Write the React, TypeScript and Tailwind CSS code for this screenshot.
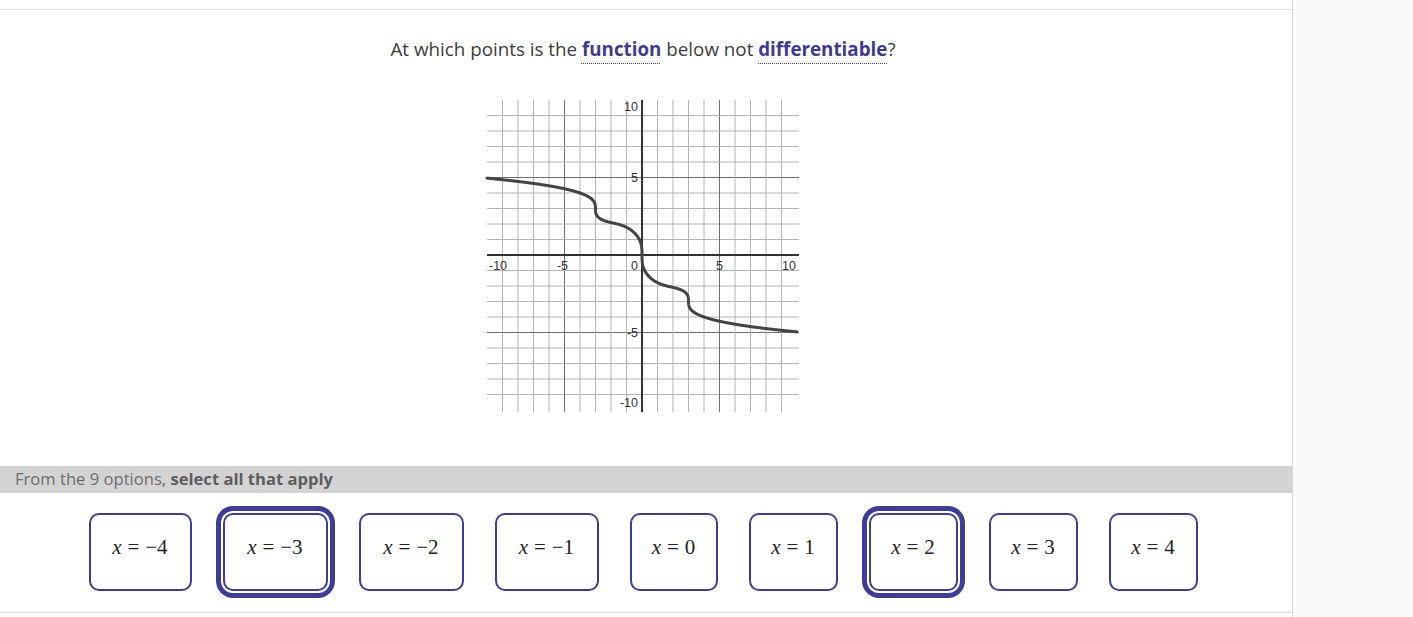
import React from 'react';

const options = [
  { label: '−4', w: 'w-[103px]', selected: false },
  { label: '−3', w: 'w-[105px]', selected: true },
  { label: '−2', w: 'w-[105px]', selected: false },
  { label: '−1', w: 'w-[104px]', selected: false },
  { label: '0', w: 'w-[88px]', selected: false },
  { label: '1', w: 'w-[89px]', selected: false },
  { label: '2', w: 'w-[89px]', selected: true },
  { label: '3', w: 'w-[89px]', selected: false },
  { label: '4', w: 'w-[89px]', selected: false },
];

// graph: -10..10 on both axes, 15.5px per unit, 5px margin inside the svg
const U = 15.5;
const M = 5;
const px = (x: number) => M + (x + 10) * U;
const py = (y: number) => M + (10 - y) * U;

function fpos(x: number) {
  const c = 2.95;
  if (x <= 3) {
    const t = x / 3;
    const w = t * t * (3 - 2 * t);
    const l = -1.78 * Math.cbrt(x);
    const r = -c + 0.91 * Math.cbrt(3 - x);
    return (1 - w) * l + w * r;
  }
  return -c - 1.05 * Math.cbrt(x - 3);
}
const f = (x: number) => (x >= 0 ? fpos(x) : -fpos(-x));

function curvePath() {
  const pts: string[] = [];
  const n = 8000;
  for (let i = 0; i <= n; i++) {
    const x = -10 + (20 * i) / n;
    pts.push(`${px(x).toFixed(2)},${py(f(x)).toFixed(2)}`);
  }
  return 'M' + pts.join('L');
}

function Graph() {
  const lines = [];
  for (let i = -9; i <= 9; i++) {
    if (i === 0) continue;
    const major = i % 5 === 0;
    const col = major ? '#6e6e6e' : '#b4b4b4';
    lines.push(<line key={'v' + i} x1={px(i)} y1={M} x2={px(i)} y2={py(-10) + 2} stroke={col} strokeWidth={1} />);
    lines.push(<line key={'h' + i} x1={M} y1={py(i)} x2={px(10) + 2} y2={py(i)} stroke={col} strokeWidth={1} />);
  }
  return (
    <svg width="322" height="322" className="block mx-auto mt-[32px]" style={{ fontFamily: '"Liberation Sans", Arial, sans-serif' }}>
      {lines}
      <line x1={M} y1={py(0)} x2={px(10) + 2} y2={py(0)} stroke="#333" strokeWidth={2} />
      <line x1={px(0)} y1={M} x2={px(0)} y2={py(-10) + 2} stroke="#333" strokeWidth={2} />
      <g fontSize="12.5" fill="#333">
        <text x={px(0) - 4} y={py(10) + 11} textAnchor="end">10</text>
        <text x={px(0) - 4} y={py(5) + 4} textAnchor="end">5</text>
        <text x={px(0) - 4} y={py(-5) + 4} textAnchor="end">-5</text>
        <text x={px(0) - 4} y={py(-10) - 3} textAnchor="end">-10</text>
        <text x={px(-10) + 2} y={py(0) + 15}>-10</text>
        <text x={px(-5) - 2} y={py(0) + 15} textAnchor="middle">-5</text>
        <text x={px(0) - 4} y={py(0) + 15} textAnchor="end">0</text>
        <text x={px(5)} y={py(0) + 15} textAnchor="middle">5</text>
        <text x={px(10) - 1} y={py(0) + 15} textAnchor="end">10</text>
      </g>
      <path d={curvePath()} fill="none" stroke="#444" strokeWidth={3} strokeLinejoin="round" strokeLinecap="round" />
    </svg>
  );
}

export default function App() {
  return (
    <div className="flex w-full h-[617px] bg-[#f9f9f9] overflow-hidden">
      <div className="w-[1293px] shrink-0 bg-white border-r border-[#dcdcdc] flex flex-col">
        <div className="h-[9px]" />
        <div className="border-t border-[#e2e2e2]">
          <div className="pr-[6px] pt-[25px]">
            <p
              className="text-center text-[18.8px] leading-[28px] text-[#3d3d3d]"
              style={{ fontFamily: '"Open Sans", sans-serif' }}
            >
              At which points is the{' '}
              <span className="font-bold text-[#3f3c8f] underline decoration-dotted decoration-1 underline-offset-[7px]">function</span>{' '}
              below not{' '}
              <span className="font-bold text-[#3f3c8f] underline decoration-dotted decoration-1 underline-offset-[7px]">differentiable</span>?
            </p>
            <Graph />
          </div>

          <div
            className="mt-[49px] h-[27px] bg-[#d3d3d3] flex items-center pl-[15px] text-[16.6px] text-[#6e6e6e]"
            style={{ fontFamily: '"Open Sans", sans-serif' }}
          >
            From the 9 options,&nbsp;<span className="font-bold text-[#5e5e5e]">select all that apply</span>
          </div>

          <div className="mt-[20px] pr-[6px] flex justify-center gap-[31px]">
            {options.map((o) => (
              <div
                key={o.label}
                className={`${o.w} h-[78px] pb-[9px] rounded-[10px] border-2 border-[#3e3c94] bg-white flex items-center justify-center text-[21px] text-[#222] ${
                  o.selected ? 'shadow-[0_0_0_2px_#ffffff,0_0_0_7px_#3e3c94]' : ''
                }`}
                style={{ fontFamily: '"Liberation Serif", "Times New Roman", serif' }}
              >
                <span className="italic">x</span>
                <span className="mx-[0.28em]">=</span>
                <span>{o.label}</span>
              </div>
            ))}
          </div>

          <div className="mt-[21px] border-t border-[#dcdcdc]" />
        </div>
      </div>
      <div className="flex-1" />
    </div>
  );
}
